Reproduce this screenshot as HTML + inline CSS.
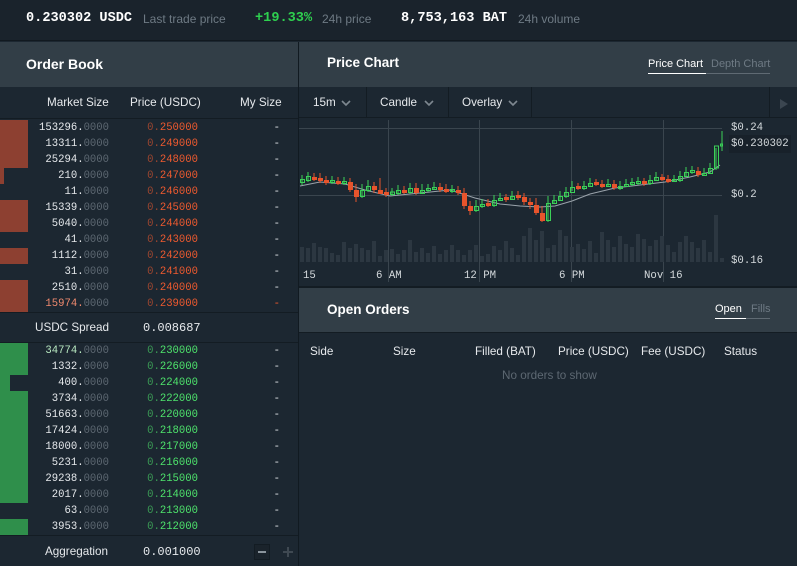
<!DOCTYPE html>
<html><head><meta charset="utf-8">
<style>
*{margin:0;padding:0;box-sizing:border-box}
body{width:797px;height:566px;background:#1c2731;font-family:"Liberation Sans",sans-serif;color:#e6e9ec;position:relative;overflow:hidden;font-size:12px}
.a{position:absolute;white-space:nowrap}
.m{font-family:"Liberation Mono",monospace}
.hdr{background:#323e47}
.dim{color:#5d6872}
.row{position:absolute;left:0;width:298px;height:16px;font-family:"Liberation Mono",monospace;font-size:10.6px;line-height:16px}
.row .s{position:absolute;right:189px}
.row .p{position:absolute;right:100px}
.row .d{position:absolute;right:18px;color:#dfe3e6}
.row .b{position:absolute;left:0;top:0;height:16px}
.ask .b{background:#8d4031}.bid .b{background:#2f8f4b}
.ask .p{color:#ef5a2f}.bid .p{color:#4ee46c}
.p i{font-style:normal;opacity:.6}
.ax{font-family:"Liberation Mono",monospace;font-size:10.7px;color:#d5dadd;position:absolute;white-space:nowrap}
.h{font-size:11.7px}
</style></head><body>
<div class="a" style="left:0;top:0;width:797px;height:41px;background:#1a232c;border-bottom:1px solid #111920"></div>
<div class="a m" style="left:26px;top:11px;font-size:13.6px;font-weight:bold;color:#fff">0.230302 USDC</div>
<div class="a" style="left:143px;top:12px;font-size:12px;color:#6e7a84">Last trade price</div>
<div class="a m" style="left:255px;top:11px;font-size:13.6px;font-weight:bold;color:#2ed04f">+19.33%</div>
<div class="a" style="left:322px;top:12px;font-size:12px;color:#6e7a84">24h price</div>
<div class="a m" style="left:401px;top:11px;font-size:13.6px;font-weight:bold;color:#fff">8,753,163 BAT</div>
<div class="a" style="left:518px;top:12px;font-size:12px;color:#6e7a84">24h volume</div>

<div class="a hdr" style="left:0;top:42px;width:298px;height:45px"></div>
<div class="a" style="left:26px;top:56px;font-size:14px;font-weight:bold;color:#fff">Order Book</div>
<div class="a" style="left:298px;top:42px;width:1px;height:524px;background:#111a21"></div>
<div class="a" style="left:0;top:87px;width:298px;height:32px;border-bottom:1px solid #131c23"></div>
<div class="a h" style="left:47px;top:96px">Market Size</div>
<div class="a h" style="left:130px;top:96px">Price (USDC)</div>
<div class="a h" style="left:240px;top:96px">My Size</div>

<div class="ask">
<div class="row" style="top:120px"><div class="b" style="width:28px"></div><span class="s">153296.<span class="dim">0000</span></span><span class="p"><i>0.</i>250000</span><span class="d">-</span></div>
<div class="row" style="top:136px"><div class="b" style="width:28px"></div><span class="s">13311.<span class="dim">0000</span></span><span class="p"><i>0.</i>249000</span><span class="d">-</span></div>
<div class="row" style="top:152px"><div class="b" style="width:28px"></div><span class="s">25294.<span class="dim">0000</span></span><span class="p"><i>0.</i>248000</span><span class="d">-</span></div>
<div class="row" style="top:168px"><div class="b" style="width:4px"></div><span class="s">210.<span class="dim">0000</span></span><span class="p"><i>0.</i>247000</span><span class="d">-</span></div>
<div class="row" style="top:184px"><span class="s">11.<span class="dim">0000</span></span><span class="p"><i>0.</i>246000</span><span class="d">-</span></div>
<div class="row" style="top:200px"><div class="b" style="width:28px"></div><span class="s">15339.<span class="dim">0000</span></span><span class="p"><i>0.</i>245000</span><span class="d">-</span></div>
<div class="row" style="top:216px"><div class="b" style="width:28px"></div><span class="s">5040.<span class="dim">0000</span></span><span class="p"><i>0.</i>244000</span><span class="d">-</span></div>
<div class="row" style="top:232px"><span class="s">41.<span class="dim">0000</span></span><span class="p"><i>0.</i>243000</span><span class="d">-</span></div>
<div class="row" style="top:248px"><div class="b" style="width:28px"></div><span class="s">1112.<span class="dim">0000</span></span><span class="p"><i>0.</i>242000</span><span class="d">-</span></div>
<div class="row" style="top:264px"><span class="s">31.<span class="dim">0000</span></span><span class="p"><i>0.</i>241000</span><span class="d">-</span></div>
<div class="row" style="top:280px"><div class="b" style="width:28px"></div><span class="s">2510.<span class="dim">0000</span></span><span class="p"><i>0.</i>240000</span><span class="d">-</span></div>
<div class="row" style="top:296px"><div class="b" style="width:28px"></div><span class="s" style="color:#f08a6e">15974.<span class="dim">0000</span></span><span class="p"><i>0.</i>239000</span><span class="d" style="color:#f0582d">-</span></div>
</div>
<div class="a" style="left:0;top:312px;width:298px;height:31px;border-top:1px solid #131c23;border-bottom:1px solid #131c23"></div>
<div class="a h" style="left:35px;top:321px">USDC Spread</div>
<div class="a m" style="left:143px;top:321px;font-size:12px">0.008687</div>
<div class="bid">
<div class="row" style="top:343px"><div class="b" style="width:28px"></div><span class="s" style="color:#b8e8c0">34774.<span class="dim">0000</span></span><span class="p"><i>0.</i>230000</span><span class="d">-</span></div>
<div class="row" style="top:359px"><div class="b" style="width:28px"></div><span class="s">1332.<span class="dim">0000</span></span><span class="p"><i>0.</i>226000</span><span class="d">-</span></div>
<div class="row" style="top:375px"><div class="b" style="width:10px"></div><span class="s">400.<span class="dim">0000</span></span><span class="p"><i>0.</i>224000</span><span class="d">-</span></div>
<div class="row" style="top:391px"><div class="b" style="width:28px"></div><span class="s">3734.<span class="dim">0000</span></span><span class="p"><i>0.</i>222000</span><span class="d">-</span></div>
<div class="row" style="top:407px"><div class="b" style="width:28px"></div><span class="s">51663.<span class="dim">0000</span></span><span class="p"><i>0.</i>220000</span><span class="d">-</span></div>
<div class="row" style="top:423px"><div class="b" style="width:28px"></div><span class="s">17424.<span class="dim">0000</span></span><span class="p"><i>0.</i>218000</span><span class="d">-</span></div>
<div class="row" style="top:439px"><div class="b" style="width:28px"></div><span class="s">18000.<span class="dim">0000</span></span><span class="p"><i>0.</i>217000</span><span class="d">-</span></div>
<div class="row" style="top:455px"><div class="b" style="width:28px"></div><span class="s">5231.<span class="dim">0000</span></span><span class="p"><i>0.</i>216000</span><span class="d">-</span></div>
<div class="row" style="top:471px"><div class="b" style="width:28px"></div><span class="s">29238.<span class="dim">0000</span></span><span class="p"><i>0.</i>215000</span><span class="d">-</span></div>
<div class="row" style="top:487px"><div class="b" style="width:28px"></div><span class="s">2017.<span class="dim">0000</span></span><span class="p"><i>0.</i>214000</span><span class="d">-</span></div>
<div class="row" style="top:503px"><span class="s">63.<span class="dim">0000</span></span><span class="p"><i>0.</i>213000</span><span class="d">-</span></div>
<div class="row" style="top:519px"><div class="b" style="width:28px"></div><span class="s">3953.<span class="dim">0000</span></span><span class="p"><i>0.</i>212000</span><span class="d">-</span></div>
</div>
<div class="a" style="left:0;top:535px;width:298px;height:1px;background:#131c23"></div>
<div class="a h" style="left:45px;top:545px">Aggregation</div>
<div class="a m" style="left:143px;top:545px;font-size:12px">0.001000</div>
<div class="a" style="left:254px;top:544px;width:16px;height:16px;border:1px solid #131c23;background:#1a232b"></div>
<div class="a" style="left:258px;top:551px;width:8px;height:2px;background:#8a949c"></div>
<div class="a" style="left:283px;top:551px;width:10px;height:2px;background:#3f4952"></div>
<div class="a" style="left:287px;top:547px;width:2px;height:10px;background:#3f4952"></div>

<div class="a hdr" style="left:299px;top:42px;width:498px;height:45px"></div>
<div class="a" style="left:327px;top:55px;font-size:13.5px;font-weight:bold;color:#fff">Price Chart</div>
<div class="a" style="left:648px;top:58px;font-size:11px;color:#fff">Price Chart</div>
<div class="a" style="left:648px;top:73px;width:58px;height:1px;background:#fff"></div>
<div class="a" style="left:711px;top:58px;font-size:11px;color:#6e7a84">Depth Chart</div>
<div class="a" style="left:706px;top:73px;width:64px;height:1px;background:#5f6a73"></div>
<div class="a" style="left:299px;top:87px;width:498px;height:31px;border-bottom:1px solid #131c23"></div>
<div class="a" style="left:366px;top:87px;width:1px;height:31px;background:#131c23"></div>
<div class="a" style="left:448px;top:87px;width:1px;height:31px;background:#131c23"></div>
<div class="a" style="left:531px;top:87px;width:1px;height:31px;background:#131c23"></div>
<div class="a" style="left:769px;top:87px;width:1px;height:31px;background:#131c23"></div>
<div class="a h" style="left:313px;top:96px">15m</div>
<div class="a h" style="left:380px;top:96px">Candle</div>
<div class="a h" style="left:462px;top:96px">Overlay</div>
<svg class="a" style="left:0;top:0" width="797" height="566">
<g fill="none" stroke="#7e8890" stroke-width="1.6"><path d="M342 101l4 4 4-4M425 101l4 4 4-4M509 101l4 4 4-4"/></g>
<path d="M780 99v10l8-5z" fill="#3b4650"/>
<g stroke="#3a454e" stroke-width="1"><path d="M299 128.5h423M299 195.5h423M388.5 120v162M479.5 120v162M571.5 120v162M663.5 120v162"/></g>
<g fill="#2c3741">
<rect x="300" y="247" width="4" height="15"/><rect x="306" y="248" width="4" height="14"/><rect x="312" y="243" width="4" height="19"/><rect x="318" y="247" width="4" height="15"/><rect x="324" y="248" width="4" height="14"/><rect x="330" y="253" width="4" height="9"/><rect x="336" y="255" width="4" height="7"/><rect x="342" y="242" width="4" height="20"/><rect x="348" y="248" width="4" height="14"/><rect x="354" y="244" width="4" height="18"/><rect x="360" y="248" width="4" height="14"/><rect x="366" y="250" width="4" height="12"/><rect x="372" y="241" width="4" height="21"/><rect x="378" y="256" width="4" height="6"/><rect x="384" y="250" width="4" height="12"/><rect x="390" y="249" width="4" height="13"/><rect x="396" y="254" width="4" height="8"/><rect x="402" y="250" width="4" height="12"/><rect x="408" y="240" width="4" height="22"/><rect x="414" y="252" width="4" height="10"/><rect x="420" y="248" width="4" height="14"/><rect x="426" y="253" width="4" height="9"/><rect x="432" y="246" width="4" height="16"/><rect x="438" y="254" width="4" height="8"/><rect x="444" y="250" width="4" height="12"/><rect x="450" y="245" width="4" height="17"/><rect x="456" y="250" width="4" height="12"/><rect x="462" y="255" width="4" height="7"/><rect x="468" y="250" width="4" height="12"/><rect x="474" y="245" width="4" height="17"/><rect x="480" y="256" width="4" height="6"/><rect x="486" y="254" width="4" height="8"/><rect x="492" y="246" width="4" height="16"/><rect x="498" y="250" width="4" height="12"/><rect x="504" y="241" width="4" height="21"/><rect x="510" y="248" width="4" height="14"/><rect x="516" y="255" width="4" height="7"/><rect x="522" y="236" width="4" height="26"/><rect x="528" y="228" width="4" height="34"/><rect x="534" y="240" width="4" height="22"/><rect x="540" y="231" width="4" height="31"/><rect x="546" y="248" width="4" height="14"/><rect x="552" y="245" width="4" height="17"/><rect x="558" y="230" width="4" height="32"/><rect x="564" y="236" width="4" height="26"/><rect x="570" y="247" width="4" height="15"/><rect x="576" y="244" width="4" height="18"/><rect x="582" y="249" width="4" height="13"/><rect x="588" y="241" width="4" height="21"/><rect x="594" y="253" width="4" height="9"/><rect x="600" y="232" width="4" height="30"/><rect x="606" y="240" width="4" height="22"/><rect x="612" y="247" width="4" height="15"/><rect x="618" y="236" width="4" height="26"/><rect x="624" y="244" width="4" height="18"/><rect x="630" y="247" width="4" height="15"/><rect x="636" y="234" width="4" height="28"/><rect x="642" y="239" width="4" height="23"/><rect x="648" y="246" width="4" height="16"/><rect x="654" y="240" width="4" height="22"/><rect x="660" y="236" width="4" height="26"/><rect x="666" y="245" width="4" height="17"/><rect x="672" y="252" width="4" height="10"/><rect x="678" y="242" width="4" height="20"/><rect x="684" y="236" width="4" height="26"/><rect x="690" y="242" width="4" height="20"/><rect x="696" y="248" width="4" height="14"/><rect x="702" y="240" width="4" height="22"/><rect x="708" y="252" width="4" height="10"/><rect x="714" y="215" width="4" height="47"/><rect x="720" y="258" width="4" height="4"/>
</g>
<path d="M300 186 L320 182 L345 184 L365 190 L390 196 L420 193 L450 190 L475 198 L500 204 L520 206 L540 207 L555 206 L572 201 L590 194 L615 188 L640 185 L665 182 L690 177 L710 172 L720 165" fill="none" stroke="#9aa3ab" stroke-width="1"/>
<g stroke="#3bd058" stroke-width="1"><path d="M302 175v10M308 172v10M332 176v8M344 177v8M362 184v14M368 180v12M392 188v8M398 185v10M410 183v11M422 184v10M428 184v8M434 182v8M452 185v8M476 200v12M482 199v9M494 195v12M500 193v8M512 191v8M548 196v26M554 195v8M560 191v9M566 187v11M572 181v10M584 181v9M590 178v8M608 179v8M620 181v9M626 179v8M632 178v8M638 177v8M650 175v10M656 172v8M674 175v7M680 171v11M686 167v9M692 166v8M704 168v8M710 163v11M716 148v22M722 131v20"/></g>
<g stroke="#e3532c" stroke-width="1"><path d="M314 173v8M320 173v10M326 176v9M338 177v8M350 178v14M356 184v18M374 182v11M380 178v16M386 188v9M404 186v8M416 183v12M440 183v9M446 184v9M458 186v9M464 188v21M470 201v14M488 199v8M506 194v8M518 191v9M524 193v12M530 198v11M536 198v17M542 206v16M578 183v7M596 179v7M602 180v8M614 180v10M644 178v8M662 174v7M668 175v8M698 167v10"/></g>
<g fill="none" stroke="#3bd058" stroke-width="1"><rect x="300.5" y="179.5" width="4" height="3"/><rect x="306.5" y="176.5" width="4" height="4"/><rect x="330.5" y="180.5" width="4" height="2"/><rect x="342.5" y="181.5" width="4" height="2"/><rect x="360.5" y="190.5" width="4" height="6"/><rect x="366.5" y="186.5" width="4" height="4"/><rect x="390.5" y="192" width="4" height="2.5"/><rect x="396.5" y="190.5" width="4" height="3"/><rect x="408.5" y="188.5" width="4" height="4"/><rect x="420.5" y="190.5" width="4" height="3"/><rect x="426.5" y="188.5" width="4" height="2"/><rect x="432.5" y="187.5" width="4" height="2"/><rect x="450.5" y="189.5" width="4" height="2"/><rect x="474.5" y="206.5" width="4" height="4"/><rect x="480.5" y="204.5" width="4" height="2"/><rect x="492.5" y="200.5" width="4" height="5"/><rect x="498.5" y="198.5" width="4" height="2"/><rect x="510.5" y="196.5" width="4" height="3"/><rect x="546.5" y="203.5" width="4" height="17"/><rect x="552.5" y="200.5" width="4" height="3"/><rect x="558.5" y="196.5" width="4" height="4"/><rect x="564.5" y="192.5" width="4" height="4"/><rect x="570.5" y="187.5" width="4" height="5"/><rect x="582.5" y="186.5" width="4" height="2"/><rect x="588.5" y="183.5" width="4" height="3"/><rect x="606.5" y="184.5" width="4" height="2"/><rect x="618.5" y="186.5" width="4" height="2"/><rect x="624.5" y="184.5" width="4" height="2"/><rect x="630.5" y="182.5" width="4" height="2"/><rect x="636.5" y="181.5" width="4" height="2"/><rect x="648.5" y="180.5" width="4" height="3"/><rect x="654.5" y="177.5" width="4" height="3"/><rect x="672.5" y="179.5" width="4" height="2"/><rect x="678.5" y="176.5" width="4" height="4"/><rect x="684.5" y="172.5" width="4" height="4"/><rect x="690.5" y="170.5" width="4" height="2"/><rect x="702.5" y="173.5" width="4" height="2"/><rect x="708.5" y="168.5" width="4" height="5"/><rect x="714.5" y="146" width="4" height="22"/><rect x="720.5" y="144" width="2" height="2"/></g>
<g fill="#e8542c"><rect x="312" y="177" width="5" height="3"/><rect x="318" y="178" width="5" height="3"/><rect x="324" y="180" width="5" height="3"/><rect x="336" y="181" width="5" height="3"/><rect x="348" y="182" width="5" height="8"/><rect x="354" y="190" width="5" height="7"/><rect x="372" y="186" width="5" height="4"/><rect x="378" y="190" width="5" height="4"/><rect x="384" y="192" width="5" height="3"/><rect x="402" y="190" width="5" height="3"/><rect x="414" y="188" width="5" height="5"/><rect x="438" y="187" width="5" height="3"/><rect x="444" y="189" width="5" height="3"/><rect x="456" y="190" width="5" height="3"/><rect x="462" y="193" width="5" height="13"/><rect x="468" y="206" width="5" height="5"/><rect x="486" y="203" width="5" height="3"/><rect x="504" y="197" width="5" height="3"/><rect x="516" y="195" width="5" height="3"/><rect x="522" y="197" width="5" height="5"/><rect x="528" y="202" width="5" height="3"/><rect x="534" y="205" width="5" height="8"/><rect x="540" y="213" width="5" height="8"/><rect x="576" y="186" width="5" height="3"/><rect x="594" y="182" width="5" height="3"/><rect x="600" y="184" width="5" height="3"/><rect x="612" y="184" width="5" height="4"/><rect x="642" y="181" width="5" height="3"/><rect x="660" y="177" width="5" height="3"/><rect x="666" y="179" width="5" height="3"/><rect x="696" y="171" width="5" height="4"/></g>
<rect x="729" y="135" width="62" height="18" fill="#18212a"/>
</svg>
<div class="ax" style="left:731px;top:122px">$0.24</div>
<div class="ax" style="left:731px;top:138px">$0.230302</div>
<div class="ax" style="left:731px;top:189px">$0.2</div>
<div class="ax" style="left:731px;top:255px">$0.16</div>
<div class="ax" style="left:303px;top:270px">15</div>
<div class="ax" style="left:376px;top:270px">6 AM</div>
<div class="ax" style="left:464px;top:270px">12 PM</div>
<div class="ax" style="left:559px;top:270px">6 PM</div>
<div class="ax" style="left:644px;top:270px">Nov 16</div>
<div class="a" style="left:299px;top:286px;width:498px;height:2px;background:#131c23"></div>

<div class="a hdr" style="left:299px;top:288px;width:498px;height:44px"></div>
<div class="a" style="left:327px;top:302px;font-size:13.5px;font-weight:bold;color:#fff">Open Orders</div>
<div class="a" style="left:715px;top:303px;font-size:11px;color:#fff">Open</div>
<div class="a" style="left:715px;top:318px;width:31px;height:1px;background:#fff"></div>
<div class="a" style="left:751px;top:303px;font-size:11px;color:#6e7a84">Fills</div>
<div class="a" style="left:746px;top:318px;width:24px;height:1px;background:#5f6a73"></div>
<div class="a" style="left:299px;top:332px;width:498px;height:1px;background:#131c23"></div>
<div class="a h" style="left:310px;top:345px">Side</div>
<div class="a h" style="left:393px;top:345px">Size</div>
<div class="a h" style="left:475px;top:345px">Filled (BAT)</div>
<div class="a h" style="left:558px;top:345px">Price (USDC)</div>
<div class="a h" style="left:641px;top:345px">Fee (USDC)</div>
<div class="a h" style="left:724px;top:345px">Status</div>
<div class="a h" style="left:502px;top:369px;color:#5d6872">No orders to show</div>
</body></html>
